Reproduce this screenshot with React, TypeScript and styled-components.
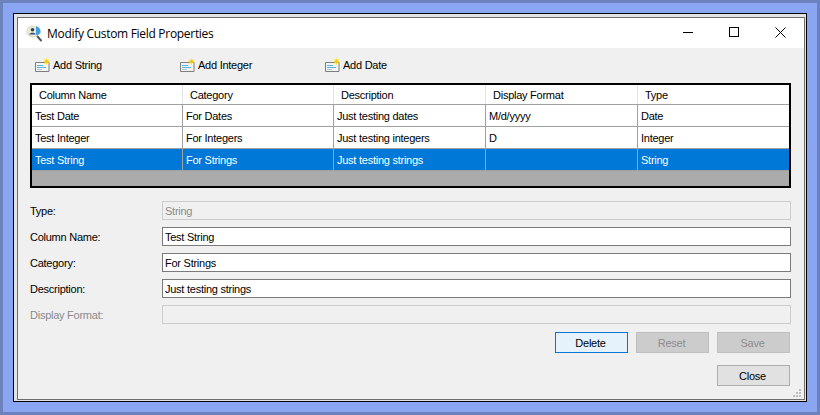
import React from 'react';
import styled, { createGlobalStyle } from 'styled-components';

const GlobalStyle = createGlobalStyle`
    html, body {
        margin: 0;
        padding: 0;
        background: #6c82bc;
    }
    body {
        font-family: "Liberation Sans", Arial, sans-serif;
        font-size: 11px;
        letter-spacing: -0.25px;
        color: #000;
    }
`;

const Backdrop = styled.div`
    width: 820px;
    height: 415px;
    box-sizing: border-box;
    border: 3px solid #6c82bc;
    background: #8aa5f2;
    padding: 10px;
    overflow: hidden;
`;

const WindowFrame = styled.div`
    box-sizing: border-box;
    width: 794px;
    height: 389px;
    border: 1px solid #000;
    background: #e3e3e3;
    padding: 3px 1px 1px 3px;
`;

const WindowInner = styled.div`
    box-sizing: border-box;
    height: 100%;
    border: 1px solid #6d6d6d;
    background: #f0f0f0;
    display: flex;
    flex-direction: column;
    position: relative;
`;

const TitleBar = styled.div`
    height: 30px;
    flex: none;
    background: #fff;
    display: flex;
    align-items: center;
    padding-left: 8px;
`;

const TitleText = styled.span`
    font-family: "Open Sans", "Noto Sans", sans-serif;
    font-size: 12px;
    letter-spacing: -0.3px;
    color: #000;
    margin-left: 4px;
`;

const WindowControls = styled.div`
    margin-left: auto;
    padding-right: 1px;
    display: flex;
`;

const ControlButton = styled.div`
    box-sizing: border-box;
    width: 46px;
    height: 30px;
    padding-bottom: 2px;
    display: flex;
    align-items: center;
    justify-content: center;
`;

const Content = styled.div`
    flex: 1;
    display: flex;
    flex-direction: column;
    padding: 0 13px 0 12px;
    background: #f0f0f0;
`;

const Toolbar = styled.div`
    height: 35px;
    flex: none;
    display: flex;
    align-items: center;
    padding: 0 0 2px 5px;
    box-sizing: border-box;
`;

const ToolButton = styled.div`
    width: 145px;
    display: flex;
    align-items: center;
    gap: 2px;
`;

const Grid = styled.div`
    box-sizing: border-box;
    width: 761px;
    height: 105px;
    flex: none;
    border: 2px solid #000;
    background: #ababab;
`;

const GridRow = styled.div<{ $selected?: boolean; $header?: boolean }>`
    display: grid;
    grid-template-columns: 151px 151px 152px 152px 151px;
    height: ${p => (p.$header ? 20 : 22)}px;
    box-sizing: border-box;
    border-bottom: 1px solid #a0a0a0;
    background: ${p => (p.$selected ? '#0078d7' : '#fff')};
    color: ${p => (p.$selected ? '#fff' : '#000')};
`;

const GridCell = styled.div<{ $header?: boolean }>`
    box-sizing: border-box;
    border-right: 1px solid ${p => (p.$header ? '#e3e3e3' : '#a0a0a0')};
    padding-left: ${p => (p.$header ? 7 : 3)}px;
    display: flex;
    align-items: center;
    white-space: nowrap;
    &:last-child {
        border-right: none;
    }
`;

const Form = styled.div`
    display: flex;
    flex-direction: column;
    gap: 7px;
    margin-top: 13px;
`;

const FormRow = styled.div`
    display: flex;
    align-items: center;
    height: 19px;
`;

const FieldLabel = styled.label<{ $disabled?: boolean }>`
    width: 132px;
    flex: none;
    color: ${p => (p.$disabled ? '#8a8a8a' : '#000')};
`;

const FieldBox = styled.div<{ $disabled?: boolean }>`
    box-sizing: border-box;
    width: 629px;
    flex: none;
    height: 19px;
    padding-left: 2px;
    display: flex;
    align-items: center;
    border: 1px solid ${p => (p.$disabled ? '#cccccc' : '#7a7a7a')};
    background: ${p => (p.$disabled ? '#f0f0f0' : '#fff')};
    color: ${p => (p.$disabled ? '#8a8a8a' : '#000')};
`;

const ButtonRow = styled.div`
    display: flex;
    justify-content: flex-end;
    gap: 8px;
    width: 760px;
    margin-top: 8px;
`;

const CloseRow = styled(ButtonRow)`
    margin-top: 12px;
`;

const DialogButton = styled.div<{ $variant?: 'focus' | 'disabled' }>`
    box-sizing: border-box;
    width: 73px;
    height: 21px;
    padding-right: 2px;
    display: flex;
    align-items: center;
    justify-content: center;
    border: 1px solid
        ${p => (p.$variant === 'focus' ? '#0078d7' : p.$variant === 'disabled' ? '#bfbfbf' : '#adadad')};
    background: ${p => (p.$variant === 'focus' ? '#e5f1fb' : p.$variant === 'disabled' ? '#cccccc' : '#e1e1e1')};
    color: ${p => (p.$variant === 'disabled' ? '#8c8c8c' : '#000')};
`;

const SizeGrip = styled.svg`
    position: absolute;
    right: 3px;
    bottom: 2px;
`;

const AppIcon = () => (
    <svg width="17" height="17" viewBox="0 0 17 17">
        <circle cx="6.5" cy="6.5" r="5.5" fill="#eeecd0" stroke="#d8d6b8" />
        <path d="M10 1c3 1 5 3.500 4.500 7l-3 2.500-1.500-1z" fill="#3f9fe0" />
        <circle cx="6.5" cy="4.8" r="1.8" fill="#2b3f66" />
        <path d="M3.2 9.500c.3-2.200 6.300-2.200 6.600 0z" fill="#2b4f8f" />
        <path d="M11 11l4.500 5" stroke="#555" strokeWidth="2" />
    </svg>
);

const AddIcon = () => (
    <svg width="16" height="14" viewBox="0 0 16 14">
        <path d="M.5 4.500h9.500v-1l1 1h3v9H.5z" fill="#f4f4f4" stroke="#7d7d7d" />
        <path d="M2 7.500h6M2 9.500h9" stroke="#58b3e0" />
        <path d="M2 11.500h5" stroke="#a8c8de" />
        <path d="M11.500 0l.8 1.700 1.700-.8-.7 1.800 1.700.8-1.700.8.700 1.700-1.700-.7-.8 1.700-.8-1.700-1.700.7.700-1.700-1.700-.8 1.700-.8-.7-1.800 1.700.8z" fill="#f8e23c" />
        <circle cx="11.500" cy="3.500" r="1.500" fill="#f2c21c" />
    </svg>
);

const columns = ['Column Name', 'Category', 'Description', 'Display Format', 'Type'];

const rows = [
    ['Test Date', 'For Dates', 'Just testing dates', 'M/d/yyyy', 'Date'],
    ['Test Integer', 'For Integers', 'Just testing integers', 'D', 'Integer'],
    ['Test String', 'For Strings', 'Just testing strings', '', 'String'],
];

const fields = [
    { label: 'Type:', value: 'String', boxDisabled: true },
    { label: 'Column Name:', value: 'Test String' },
    { label: 'Category:', value: 'For Strings' },
    { label: 'Description:', value: 'Just testing strings' },
    { label: 'Display Format:', value: '', disabled: true, boxDisabled: true },
];

const App: React.FC = () => {
    return (
        <Backdrop>
            <GlobalStyle />
            <WindowFrame>
                <WindowInner>
                    <TitleBar>
                        <AppIcon />
                        <TitleText>Modify Custom Field Properties</TitleText>
                        <WindowControls>
                            <ControlButton>
                                <svg width="10" height="10" viewBox="0 0 10 10">
                                    <path d="M0 5.500h10" stroke="#000" />
                                </svg>
                            </ControlButton>
                            <ControlButton>
                                <svg width="10" height="10" viewBox="0 0 10 10">
                                    <rect x="0.500" y="0.500" width="9" height="9" fill="none" stroke="#000" />
                                </svg>
                            </ControlButton>
                            <ControlButton>
                                <svg width="11" height="11" viewBox="0 0 11 11">
                                    <path d="M0.500 0.500l10 10M10.500 0.500l-10 10" stroke="#000" />
                                </svg>
                            </ControlButton>
                        </WindowControls>
                    </TitleBar>
                    <Content>
                        <Toolbar>
                            <ToolButton><AddIcon />Add String</ToolButton>
                            <ToolButton><AddIcon />Add Integer</ToolButton>
                            <ToolButton><AddIcon />Add Date</ToolButton>
                        </Toolbar>
                        <Grid>
                            <GridRow $header>
                                {columns.map(c => <GridCell $header key={c}>{c}</GridCell>)}
                            </GridRow>
                            {rows.map((r, i) => (
                                <GridRow key={r[0]} $selected={i === 2}>
                                    {r.map((v, j) => <GridCell key={j}>{v}</GridCell>)}
                                </GridRow>
                            ))}
                        </Grid>
                        <Form>
                            {fields.map(f => (
                                <FormRow key={f.label}>
                                    <FieldLabel $disabled={f.disabled}>{f.label}</FieldLabel>
                                    <FieldBox $disabled={f.boxDisabled}>{f.value}</FieldBox>
                                </FormRow>
                            ))}
                        </Form>
                        <ButtonRow>
                            <DialogButton $variant="focus">Delete</DialogButton>
                            <DialogButton $variant="disabled">Reset</DialogButton>
                            <DialogButton $variant="disabled">Save</DialogButton>
                        </ButtonRow>
                        <CloseRow>
                            <DialogButton>Close</DialogButton>
                        </CloseRow>
                    </Content>
                    <SizeGrip width="8" height="8" viewBox="0 0 8 8">
                        <path d="M6 0h2v2H6zM3 3h2v2H3zM6 3h2v2H6zM0 6h2v2H0zM3 6h2v2H3zM6 6h2v2H6z" fill="#bdbdbd" />
                    </SizeGrip>
                </WindowInner>
            </WindowFrame>
        </Backdrop>
    );
};

export default App;
